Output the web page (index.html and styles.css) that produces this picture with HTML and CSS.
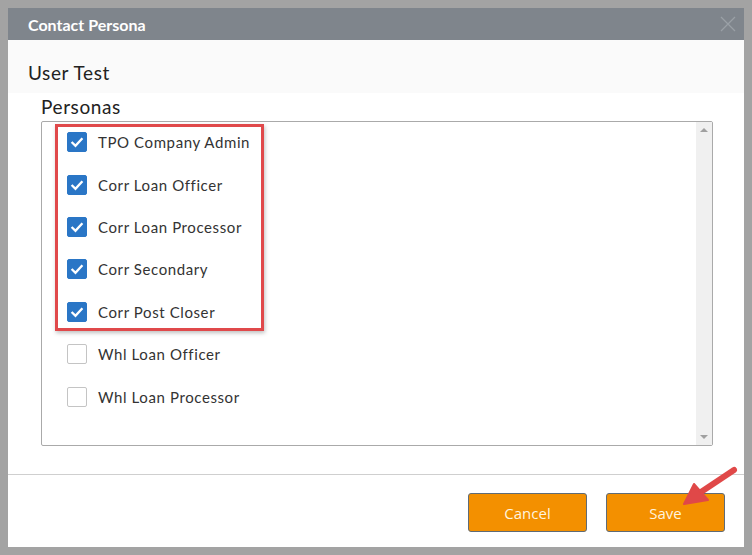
FILE: index.html
```
<!DOCTYPE html>
<html lang="en">
<head>
    <meta charset="UTF-8">
    <title>Contact Persona</title>
    <link rel="stylesheet" href="styles.css">
</head>
<body>
    <div class="dialog">
        <div class="dlg-head">
            <span class="dlg-title">Contact Persona</span>
            <svg class="dlg-close" width="16" height="16" viewBox="0 0 16 16"><path d="M1 1L15 15M15 1L1 15" stroke="#9aa0a6" stroke-width="1.3"/></svg>
        </div>
        <div class="dlg-sub">User Test</div>
        <div class="dlg-body">
            <div class="label">Personas</div>
            <div class="listbox">
                <ul class="items">
                    <li><span class="cb on"><svg viewBox="0 0 20 20"><path d="M4 10L8.3 14.3L16 5.8" fill="none" stroke="#fff" stroke-width="2.6"/></svg></span>TPO Company Admin</li>
                    <li><span class="cb on"><svg viewBox="0 0 20 20"><path d="M4 10L8.3 14.3L16 5.8" fill="none" stroke="#fff" stroke-width="2.6"/></svg></span>Corr Loan Officer</li>
                    <li><span class="cb on"><svg viewBox="0 0 20 20"><path d="M4 10L8.3 14.3L16 5.8" fill="none" stroke="#fff" stroke-width="2.6"/></svg></span>Corr Loan Processor</li>
                    <li><span class="cb on"><svg viewBox="0 0 20 20"><path d="M4 10L8.3 14.3L16 5.8" fill="none" stroke="#fff" stroke-width="2.6"/></svg></span>Corr Secondary</li>
                    <li><span class="cb on"><svg viewBox="0 0 20 20"><path d="M4 10L8.3 14.3L16 5.8" fill="none" stroke="#fff" stroke-width="2.6"/></svg></span>Corr Post Closer</li>
                    <li><span class="cb"></span>Whl Loan Officer</li>
                    <li><span class="cb"></span>Whl Loan Processor</li>
                </ul>
                <div class="scroll">
                    <span class="tri up"></span>
                    <span class="tri down"></span>
                </div>
                <div class="highlight"></div>
            </div>
        </div>
        <div class="dlg-foot">
            <button class="btn">Cancel</button>
            <button class="btn">Save</button>
        </div>
    </div>
    <svg class="pointer" width="80" height="60" viewBox="0 0 80 60">
        <path d="M58 6L22 30" stroke="#e04848" stroke-width="6" stroke-linecap="round"/>
        <path d="M8 40L18 20L32 36Z" fill="#e04848" stroke="#e04848" stroke-width="2" stroke-linejoin="round"/>
    </svg>
</body>
</html>
```

FILE: styles.css
```
body{
    margin: 0;
    padding: 8px;
    background-color: #a3a3a3;
    font-family: "Lato", "Open Sans", sans-serif;
}
.dialog{
    width: 736px;
    height: 539px;
    background-color: white;
    display: flex;
    flex-direction: column;
}
.dlg-head{
    height: 32px;
    background-color: #7f858c;
    display: flex;
    align-items: center;
    justify-content: space-between;
    padding: 0 8px 0 20px;
}
.dlg-title{
    color: white;
    font-weight: bold;
    font-size: 16px;
    letter-spacing: 0;
}
.dlg-sub{
    height: 53px;
    background-color: #fafafa;
    padding-left: 20px;
    box-sizing: border-box;
    padding-top: 21px;
    font-size: 19px;
    letter-spacing: 0.6px;
    color: #222;
}
.dlg-body{
    height: 381px;
    padding-left: 33px;
    box-sizing: border-box;
}
.label{
    font-size: 19px;
    letter-spacing: 0.6px;
    color: #222;
    height: 28px;
    line-height: 28px;
}
.listbox{
    position: relative;
    width: 672px;
    height: 325px;
    box-sizing: border-box;
    border: 1px solid #aaa;
    border-radius: 2px;
    display: flex;
}
.items{
    list-style: none;
    margin: 0;
    padding: 0 0 0 25px;
    flex: 1;
}
.items li{
    height: 42.4px;
    display: flex;
    align-items: center;
    font-size: 15px;
    letter-spacing: 0.6px;
    color: #333;
}
.items li:first-child{
    margin-top: -1px;
}
.cb{
    width: 20px;
    height: 20px;
    box-sizing: border-box;
    border: 1px solid #c4c4c4;
    border-radius: 2px;
    background-color: white;
    margin-right: 11px;
    display: inline-block;
}
.cb.on{
    background-color: #2a76c6;
    border-color: #2a76c6;
}
.cb svg{
    display: block;
    width: 18px;
    height: 18px;
}
.scroll{
    width: 16px;
    background-color: #f0f0f0;
    display: flex;
    flex-direction: column;
    justify-content: space-between;
    align-items: center;
    padding: 6px 0;
}
.tri{
    width: 0;
    height: 0;
    border-left: 4px solid transparent;
    border-right: 4px solid transparent;
}
.tri.up{
    border-bottom: 4px solid #a0a0a0;
}
.tri.down{
    border-top: 4px solid #a0a0a0;
}
.highlight{
    position: absolute;
    left: 13px;
    top: 2px;
    width: 209px;
    height: 207px;
    box-sizing: border-box;
    border: 3px solid #e0494b;
    box-shadow: 1px 2px 4px rgba(0,0,0,0.25);
}
.dlg-foot{
    flex: 1;
    border-top: 1px solid #cfcfcf;
    display: flex;
    justify-content: flex-end;
    align-items: flex-start;
    gap: 19px;
    padding: 18px 19px 0 0;
}
.btn{
    width: 119px;
    height: 39px;
    background-color: #f39000;
    border: 1px solid #5f6b76;
    border-radius: 3px;
    color: #fff4de;
    font-family: "Open Sans", sans-serif;
    font-size: 15px;
}
.pointer{
    position: absolute;
    left: 676px;
    top: 464px;
}
```
